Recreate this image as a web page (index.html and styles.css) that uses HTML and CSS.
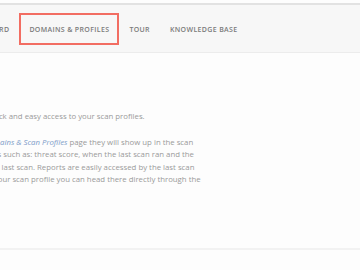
FILE: index.html
```html
<!DOCTYPE html>
<html lang="en">
<head>
    <meta charset="UTF-8">
    <meta name="viewport" content="width=device-width, initial-scale=1.0">
    <title>Dashboard</title>
    <link rel="stylesheet" href="styles.css">
</head>
<body>
    <div class="page">
        <!-- Top Navigation -->
        <nav class="main-nav">
            <a class="nav-item" href="#">DASHBOARD</a>
            <a class="nav-item highlighted" href="#">DOMAINS &amp; PROFILES</a>
            <a class="nav-item" href="#">TOUR</a>
            <a class="nav-item" href="#">KNOWLEDGE BASE</a>
        </nav>

        <!-- Intro Text -->
        <div class="content">
            <p class="lead">The Dashboard gives you quick and easy access to your scan profiles.</p>
            <p>
                <span class="line">If you add sites onto the <a href="#">Domains &amp; Scan Profiles</a> page they will show up in the scan</span>
                <span class="line">dashboard with useful details such as: threat score, when the last scan ran and the</span>
                <span class="line">results and risks found in the last scan. Reports are easily accessed by the last scan</span>
                <span class="line">date. If you do need to edit your scan profile you can head there directly through the</span>
            </p>
        </div>

        <div class="footer-line"></div>
    </div>
</body>
</html>
```

FILE: styles.css
```css
/* General Styles */
body {
    font-family: "Open Sans", Arial, sans-serif;
    background-color: #fdfdfd;
    margin: 0;
    overflow: hidden;
}

.page {
    padding-top: 3px;
}

/* Navigation */
.main-nav {
    display: flex;
    align-items: center;
    height: 47px;
    margin-left: -47px;
    background-color: #f7f7f7;
    border-top: 2px solid #e2e2e2;
    border-bottom: 1px solid #ececec;
}

.nav-item {
    display: block;
    padding: 9px 8px 8px;
    border: 2px solid transparent;
    color: #7b7b7b;
    font-size: 7px;
    font-weight: 600;
    letter-spacing: 0.35px;
    text-decoration: none;
    line-height: 11px;
}

.nav-item.highlighted {
    border-color: #f26d62;
}

/* Content */
.content {
    margin-left: -106px;
    padding-top: 57px;
    color: #9a9a9a;
    font-size: 7.8px;
    line-height: 12.5px;
    white-space: nowrap;
}

.content p {
    margin: 0 0 13px;
}

.content .line {
    display: block;
}

.content a {
    color: #7c9bc8;
    font-style: italic;
    text-decoration: none;
}

.footer-line {
    margin-top: 62px;
    height: 2px;
    background-color: #f2f2f2;
}
```
